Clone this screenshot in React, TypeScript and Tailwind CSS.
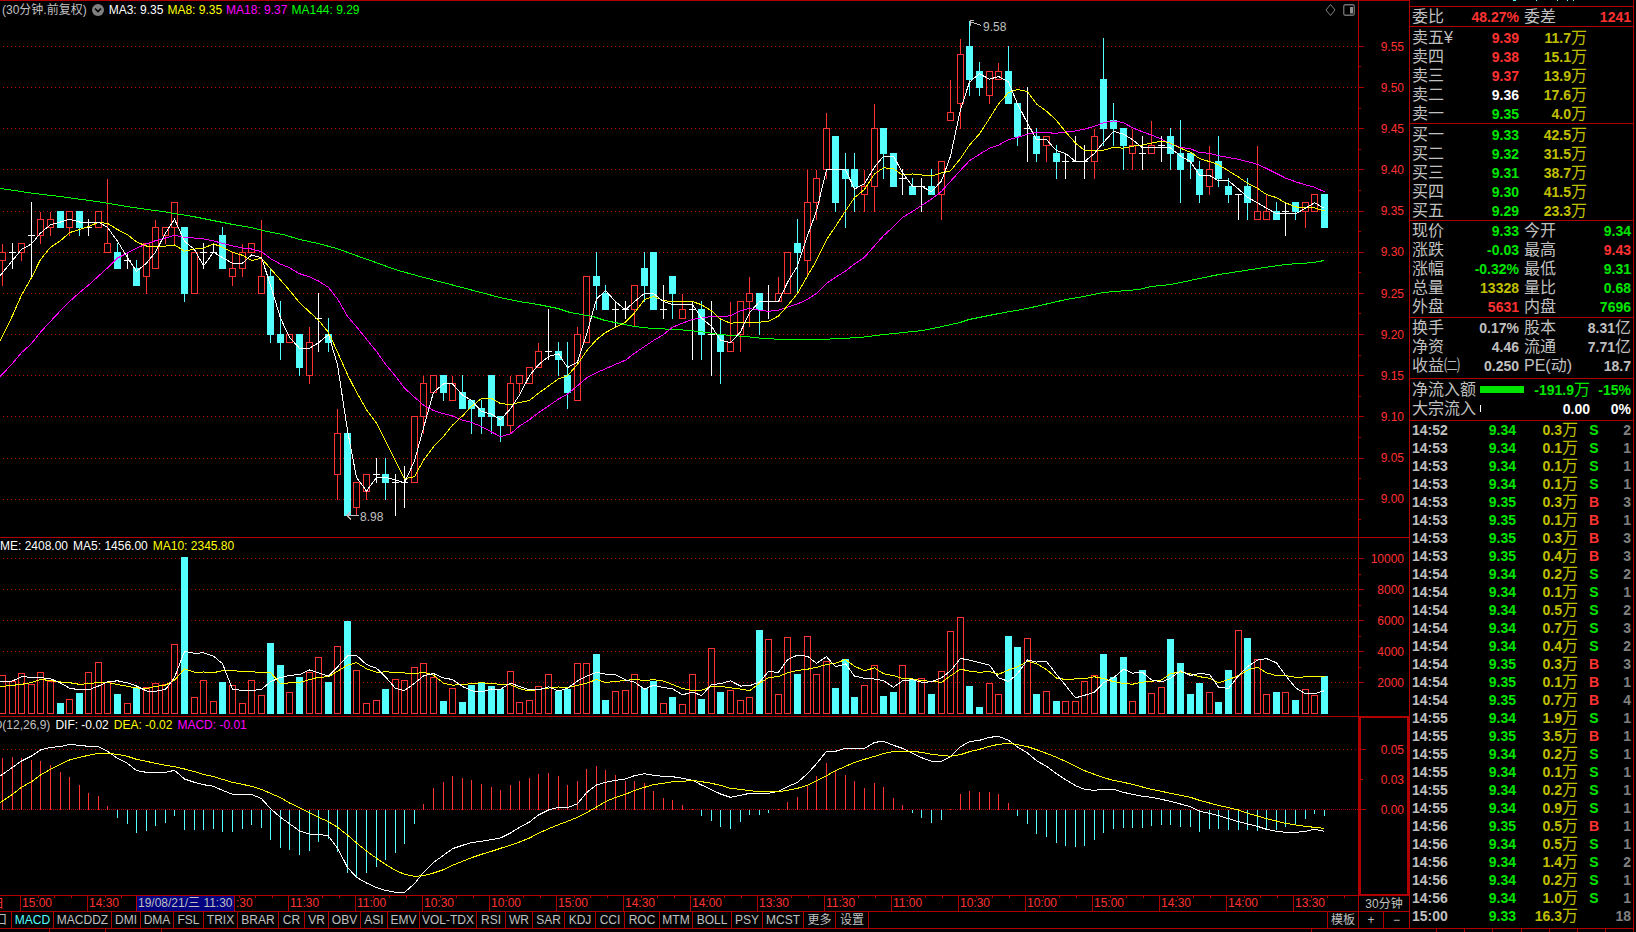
import React from "react";

/* ---------- Data ---------- */

// [open, high, low, close] in cents above 9.00
const CANDLES: number[][] = [
  [29, 31, 26, 30], [30, 31, 28, 30], [30, 31, 29, 31], [32, 36, 27, 32], [32, 35, 31, 34],
  [33, 35, 32, 34], [35, 35, 33, 33], [33, 35, 32, 35], [35, 35, 32, 33], [33, 34, 32, 33],
  [33, 35, 33, 35], [30, 39, 30, 31], [30, 31, 28, 28], [29, 30, 28, 29], [28, 29, 26, 26],
  [27, 31, 25, 31], [28, 34, 28, 33], [32, 33, 31, 33], [33, 36, 31, 36], [33, 33, 24, 25],
  [25, 30, 25, 30], [30, 31, 28, 30], [30, 31, 30, 30], [32, 33, 28, 28], [27, 30, 26, 28],
  [28, 31, 27, 30], [30, 31, 30, 31], [25, 34, 25, 27], [27, 28, 19, 20], [20, 24, 17, 19],
  [19, 20, 19, 20], [20, 20, 15, 16], [15, 21, 14, 19], [22, 25, 18, 22], [20, 22, 18, 19],
  [3, 11, 0, 8], [8, 8, -2, -2], [-1, 2, -2, 2], [1, 3, 0, 3], [3, 5, 2, 3],
  [3, 5, 0, 2], [2, 3, -2, 2], [2, 4, -1, 2], [2, 10, 2, 10], [10, 15, 8, 14],
  [13, 15, 13, 15], [15, 15, 12, 13], [12, 15, 12, 14], [13, 15, 11, 11], [12, 12, 8, 11],
  [11, 12, 8, 10], [15, 15, 8, 10], [10, 10, 7, 9], [9, 15, 8, 14], [14, 15, 13, 15],
  [14, 16, 14, 16], [16, 19, 16, 18], [18, 23, 17, 18], [18, 19, 15, 17], [15, 19, 11, 13],
  [12, 21, 12, 20], [19, 27, 19, 27], [27, 30, 23, 26], [25, 26, 23, 23], [23, 24, 21, 23],
  [23, 24, 22, 23], [23, 26, 21, 26], [28, 30, 24, 26], [30, 30, 23, 23], [23, 26, 22, 23],
  [27, 27, 22, 25], [22, 25, 22, 23], [23, 24, 17, 23], [23, 24, 17, 20], [20, 24, 15, 20],
  [20, 22, 14, 18], [18, 24, 18, 19], [20, 24, 18, 24], [24, 27, 21, 25], [25, 25, 20, 23],
  [24, 26, 22, 24], [24, 27, 24, 25], [25, 30, 25, 30], [31, 34, 25, 30], [29, 40, 27, 36],
  [36, 40, 34, 39], [40, 47, 39, 45], [44, 44, 35, 36], [40, 42, 33, 39], [40, 42, 35, 38],
  [37, 40, 35, 38], [38, 48, 35, 45], [45, 45, 39, 42], [42, 42, 38, 38], [39, 40, 37, 39],
  [38, 39, 37, 37], [38, 39, 35, 38], [38, 40, 37, 37], [37, 41, 34, 41], [46, 51, 46, 47],
  [48, 56, 45, 54], [55, 58, 49, 51], [52, 53, 49, 50], [49, 52, 48, 52], [51, 53, 51, 52],
  [52, 55, 48, 48], [48, 48, 43, 44], [45, 50, 41, 45], [44, 45, 41, 42], [43, 44, 41, 44],
  [42, 43, 39, 41], [41, 42, 39, 41], [41, 44, 41, 41], [41, 43, 39, 41], [41, 45, 39, 44],
  [51, 56, 43, 45], [46, 48, 43, 45], [45, 45, 40, 43], [42, 45, 40, 43], [42, 44, 40, 42],
  [42, 46, 42, 43], [43, 44, 41, 43], [44, 45, 40, 42], [42, 46, 36, 40], [42, 42, 39, 41],
  [40, 41, 36, 37], [38, 43, 37, 40], [41, 44, 38, 39], [38, 39, 36, 37], [37, 37, 34, 37],
  [38, 39, 34, 36], [34, 43, 34, 35], [34, 37, 34, 35], [35, 36, 34, 34], [35, 36, 32, 35],
  [36, 36, 34, 35], [35, 36, 33, 36], [35, 37, 35, 37], [37, 37, 33, 33],
];

// Volume bar tops on a grid where 551 is zero and 93 units are 2000 lots
const VOLUME: number[] = [
  437, 455, 431, 463, 427, 455, 519, 508, 489, 427,
  397, 457, 492, 520, 474, 472, 461, 463, 343, 82,
  502, 451, 514, 456, 466, 520, 451, 497, 340, 405,
  487, 441, 427, 382, 456, 349, 273, 421, 520, 511,
  478, 448, 451, 412, 400, 442, 514, 475, 516, 465,
  460, 469, 478, 424, 517, 511, 469, 433, 484, 478,
  400, 400, 373, 511, 485, 481, 433, 475, 454, 520,
  501, 523, 433, 507, 355, 487, 481, 511, 502, 301,
  328, 493, 322, 432, 319, 433, 394, 474, 388, 502,
  466, 406, 498, 487, 406, 448, 445, 492, 424, 304,
  262, 469, 532, 460, 493, 319, 352, 325, 492, 484,
  514, 514, 514, 454, 436, 373, 442, 382, 514, 421,
  490, 472, 328, 400, 492, 460, 487, 517, 421, 301,
  325, 388, 493, 487, 487, 511, 478, 496, 438,
];

// MACD series on a grid where 838 is zero and 179 units are 0.05
const DIF: number[] = [
  733, 712, 693, 678, 660, 652, 650, 643, 646, 649,
  650, 664, 685, 700, 722, 727, 727, 727, 721, 747,
  757, 764, 769, 781, 793, 794, 793, 806, 836, 862,
  881, 903, 912, 913, 918, 954, 1012, 1042, 1059, 1073,
  1081, 1087, 1087, 1061, 1027, 997, 976, 956, 946, 938,
  934, 929, 924, 909, 892, 876, 855, 840, 832, 833,
  821, 788, 765, 757, 751, 747, 737, 731, 736, 739,
  740, 745, 751, 765, 779, 792, 802, 796, 790, 790,
  790, 784, 770, 757, 731, 701, 664, 664, 655, 656,
  655, 637, 634, 646, 655, 670, 683, 694, 694, 680,
  650, 635, 631, 622, 619, 631, 651, 669, 692, 709,
  731, 749, 767, 778, 781, 778, 778, 787, 793, 799,
  802, 808, 814, 822, 830, 844, 850, 857, 866, 875,
  882, 889, 898, 904, 907, 907, 904, 898, 904,
];
const DEA: number[] = [
  813, 793, 772, 755, 735, 718, 703, 690, 682, 676,
  670, 670, 673, 679, 688, 694, 700, 706, 710, 717,
  725, 733, 740, 748, 757, 763, 769, 778, 790, 803,
  819, 833, 848, 862, 875, 892, 915, 939, 963, 985,
  1003, 1021, 1033, 1039, 1037, 1029, 1019, 1006, 994, 983,
  973, 964, 955, 946, 936, 924, 910, 896, 884, 874,
  862, 848, 831, 815, 802, 793, 781, 772, 764, 760,
  755, 754, 751, 755, 760, 766, 775, 778, 782, 785,
  785, 785, 781, 775, 766, 752, 737, 722, 709, 697,
  688, 679, 671, 664, 664, 664, 667, 673, 676, 679,
  674, 665, 658, 649, 643, 640, 644, 650, 659, 670,
  682, 694, 709, 722, 733, 743, 751, 757, 763, 771,
  778, 784, 790, 796, 802, 811, 819, 826, 833, 840,
  850, 858, 866, 873, 880, 885, 889, 892, 895,
];
const HIST: number[] = [
  684, 682, 684, 690, 693, 706, 727, 741, 766, 790,
  798, 828, 863, 881, 908, 902, 887, 879, 857, 899,
  899, 899, 896, 905, 905, 896, 884, 893, 929, 953,
  959, 974, 962, 935, 926, 965, 1028, 1042, 1028, 1010,
  989, 968, 941, 881, 822, 774, 756, 738, 744, 751,
  762, 771, 780, 766, 753, 744, 732, 729, 738, 766,
  753, 717, 708, 720, 735, 753, 753, 759, 783, 804,
  810, 825, 837, 857, 872, 890, 896, 875, 854, 854,
  848, 837, 816, 801, 765, 738, 699, 723, 735, 753,
  774, 759, 771, 804, 825, 848, 863, 878, 869, 837,
  792, 783, 786, 786, 792, 819, 857, 881, 911, 920,
  938, 947, 950, 947, 929, 908, 896, 893, 893, 893,
  887, 884, 884, 890, 890, 905, 896, 896, 899, 899,
  899, 902, 899, 899, 890, 881, 866, 851, 857,
];

const MA144: number[][] = [
  [0, 188], [15, 190], [27, 192], [43, 194], [60, 196], [82, 199], [103, 202], [127, 206],
  [147, 209], [163, 211], [174, 213], [193, 216], [213, 220], [233, 224], [251, 227], [267, 231],
  [283, 234], [300, 239], [318, 243], [337, 248], [356, 255], [376, 262], [395, 269], [420, 276],
  [443, 282], [462, 287], [481, 292], [500, 297], [519, 301], [538, 304], [558, 308], [570, 312],
  [593, 316], [605, 320], [625, 324], [634, 326], [653, 328], [677, 329], [700, 331], [720, 334],
  [745, 336], [763, 338], [785, 339], [820, 339], [840, 338], [860, 337], [884, 334], [923, 330],
  [942, 326], [960, 322], [969, 319], [999, 313], [1027, 308], [1066, 299], [1084, 296],
  [1103, 292], [1139, 289], [1151, 286], [1171, 284], [1209, 276], [1219, 274], [1258, 268],
  [1285, 264], [1314, 262], [1324, 260],
];

const MA3_LEAD = [27.5, 29];
const MA8_LEAD = [19.8, 22.3, 24.8, 26.9, 29.1, 30.6, 31.4];
const MA18_LEAD = [15.2, 16.5, 17.8, 18.9, 20.3, 21.6, 22.9, 24, 25.1, 26, 27.1, 28.1, 29.3, 29.9, 30.5, 31, 31.4];
const VMA5_LEAD = [455, 453, 440, 442];
const VMA10_LEAD = [469, 466, 463, 458, 448, 452, 456, 458, 463];

/* ---------- Chart helpers ---------- */

const RED = "#ff3232";
const CYAN = "#54ffff";
const FRAME = "#b00000";

const px = (n: number) => Math.floor(n) + 0.5;
const xAt = (i: number) => px(2.6 + 9.577 * i);
const priceY = (c: number) => 46.3 + (55 - c) * 8.236;
const gridY = (v: number) => 530 + v / 3;

function movingAverage(values: number[], n: number, lead: number[]): number[] {
  return values.map((_, i) => {
    if (i < n - 1) return lead[i];
    let sum = 0;
    for (let k = i - n + 1; k <= i; k++) sum += values[k];
    return sum / n;
  });
}

function linePoints(values: number[], y: (v: number) => number): string {
  const start = `0,${y(values[0] - (values[1] - values[0]) * 0.25)}`;
  return start + " " + values.map((v, i) => `${xAt(i)},${y(v)}`).join(" ");
}

const CLOSES = CANDLES.map((c) => c[3]);
const isDown = (i: number) => {
  const [open, , , close] = CANDLES[i];
  return close < open || (close === open && i > 0 && close < CLOSES[i - 1]);
};

function Line({ points, color }: { points: string; color: string }) {
  return <polyline points={points} fill="none" stroke={color} strokeWidth="1" />;
}

function GridLine({ y, dash = "1 3" }: { y: number; dash?: string }) {
  return <line x1="3" x2="1358" y1={y} y2={y} stroke={FRAME} strokeWidth="1" strokeDasharray={dash} />;
}

function Plot({ viewBox, label, children }: { viewBox: string; label: string; children: React.ReactNode }) {
  return (
    <svg
      role="img"
      aria-label={label}
      viewBox={viewBox}
      preserveAspectRatio="none"
      shapeRendering="crispEdges"
      className="block h-full min-w-0 flex-1"
    >
      {children}
    </svg>
  );
}

function Candle({ i }: { i: number }) {
  const [open, high, low, close] = CANDLES[i];
  const x = xAt(i);
  const top = px(priceY(Math.max(open, close)));
  const bottom = px(priceY(Math.min(open, close)));
  const hi = px(priceY(high));
  const lo = px(priceY(low));
  if (open === close) {
    return <path d={`M${x} ${hi - 0.5}V${lo + 0.5}M${x - 3.5} ${top}H${x + 3.5}`} stroke="#fff" />;
  }
  if (close < open) {
    return (
      <g>
        <path d={`M${x} ${hi - 0.5}V${lo + 0.5}`} stroke={CYAN} />
        <rect x={x - 3.5} y={top - 0.5} width="7" height={bottom - top + 1} fill={CYAN} />
      </g>
    );
  }
  return (
    <g stroke={RED} fill="none">
      <path d={`M${x} ${hi}V${top}M${x} ${bottom}V${lo}`} />
      <rect x={x - 3} y={top} width="6" height={bottom - top} />
    </g>
  );
}

function Axis({ viewBox, majors, minors }: { viewBox: string; majors: number[]; minors: number[] }) {
  return (
    <svg
      viewBox={viewBox}
      preserveAspectRatio="none"
      shapeRendering="crispEdges"
      className="block h-full w-[6px] shrink-0"
      aria-hidden="true"
    >
      {majors.map((y) => <path key={y} d={`M0 ${y}H5`} stroke={FRAME} />)}
      {minors.map((y) => <path key={y} d={`M0 ${y}H2`} stroke={FRAME} />)}
    </svg>
  );
}

/* ---------- Panes ---------- */

const PRICE_LABELS = ["9.55", "9.50", "9.45", "9.40", "9.35", "9.30", "9.25", "9.20", "9.15", "9.10", "9.05", "9.00"];
const PRICE_LEVELS = PRICE_LABELS.map((_, k) => px(priceY(55 - 5 * k)));
const PRICE_MINORS = PRICE_LABELS.map((_, k) => px(priceY(52.5 - 5 * k)));

function PricePane() {
  return (
    <section className="relative flex min-h-0 border-t border-[#b00000]">
      <Plot viewBox="0 1 1358 536" label="30分钟K线">
        {PRICE_LEVELS.map((y) => <GridLine key={y} y={y} />)}
        {CANDLES.map((_, i) => <Candle key={i} i={i} />)}
        <Line color="#00ff00" points={MA144.map(([x, y]) => `${x},${y + 0.5}`).join(" ")} />
        <Line color="#ff00ff" points={linePoints(movingAverage(CLOSES, 18, MA18_LEAD), priceY)} />
        <Line color="#ffff00" points={linePoints(movingAverage(CLOSES, 8, MA8_LEAD), priceY)} />
        <Line color="#ffffff" points={linePoints(movingAverage(CLOSES, 3, MA3_LEAD), priceY)} />
        <g stroke="#c0c0c0" fill="none">
          <path d="M981 25.5L970 21.5M974 20.5H970V26" />
          <path d="M359 515.5H347M351 511.5L347 515.5L351 519.5" />
        </g>
        <g fill="#c0c0c0" className="font-['Liberation_Sans',sans-serif] text-[12px]">
          <text x="983" y="31">9.58</text>
          <text x="360" y="521">8.98</text>
        </g>
      </Plot>
      <div className="flex w-[51px] shrink-0 border-l border-[#b00000]">
        <Axis viewBox="0 1 6 536" majors={PRICE_LEVELS} minors={PRICE_MINORS} />
        <div className="flex flex-1 flex-col pt-[25px] pr-[5px] pb-[17px] text-right text-[#ff3232]">
          {PRICE_LABELS.map((p) => (
            <span key={p} className="flex flex-1 items-center justify-end">{p}</span>
          ))}
        </div>
      </div>
      <header className="absolute top-0 right-[54px] left-0 flex h-[18px] items-center gap-[4px] pl-[2px] whitespace-nowrap">
        <span className="text-[#c0c0c0]">(30分钟.前复权)</span>
        <button aria-label="均线设置" className="mx-[1px] flex size-[12px] items-center justify-center rounded-full bg-[#808080]">
          <svg viewBox="0 0 12 12" className="size-[12px]"><path d="M3 4.5L6 7.5L9 4.5" fill="none" stroke="#000" strokeWidth="1.6" /></svg>
        </button>
        <span className="text-white">MA3: 9.35</span>
        <span className="text-[#ffff00]">MA8: 9.35</span>
        <span className="text-[#ff00ff]">MA18: 9.37</span>
        <span className="text-[#00ff00]">MA144: 9.29</span>
        <div className="ml-auto flex items-center gap-[6px]">
          <button aria-label="标记">
            <svg viewBox="0 0 12 12" className="size-[12px]"><path d="M5.5 0.5L10 6L5.5 11.5L1 6Z" fill="none" stroke="#808080" /></svg>
          </button>
          <button aria-label="侧栏">
            <svg viewBox="0 0 12 12" className="size-[12px]">
              <rect x="0.75" y="0.75" width="10.5" height="10.5" rx="1.5" fill="none" stroke="#707070" strokeWidth="1.3" />
              <rect x="7" y="3" width="3" height="6.5" fill="#909090" />
            </svg>
          </button>
        </div>
      </header>
    </section>
  );
}

const VOLUME_LEVELS = [558.5, 589.5, 620.5, 651.5, 682.5];

function VolumePane() {
  return (
    <section className="relative flex min-h-0 border-t border-[#b00000]">
      <Plot viewBox="0 538 1358 178" label="成交量">
        {VOLUME_LEVELS.map((y) => <GridLine key={y} y={y} />)}
        {VOLUME.map((v, i) => {
          const top = px(gridY(v));
          return isDown(i) ? (
            <rect key={i} x={xAt(i) - 3.5} y={top - 0.5} width="7" height={714 - top + 0.5} fill={CYAN} />
          ) : (
            <rect key={i} x={xAt(i) - 3} y={top} width="6" height={713.5 - top} fill="none" stroke={RED} />
          );
        })}
        <Line color="#ffff00" points={linePoints(movingAverage(VOLUME, 10, VMA10_LEAD), gridY)} />
        <Line color="#ffffff" points={linePoints(movingAverage(VOLUME, 5, VMA5_LEAD), gridY)} />
      </Plot>
      <div className="flex w-[51px] shrink-0 border-l border-[#b00000]">
        <Axis viewBox="0 538 6 178" majors={VOLUME_LEVELS} minors={[574.5, 605.5, 636.5, 667.5]} />
        <div className="flex flex-1 flex-col pt-[5px] pr-[5px] pb-[18px] text-[#ff3232]">
          {["10000", "8000", "6000", "4000", "2000"].map((v) => (
            <span key={v} className="flex flex-1 items-center justify-end">{v}</span>
          ))}
        </div>
      </div>
      <header className="absolute top-0 left-0 flex h-[16px] items-center gap-[5px] whitespace-nowrap">
        <span className="text-white">ME: 2408.00</span>
        <span className="text-white">MA5: 1456.00</span>
        <span className="text-[#ffff00]">MA10: 2345.80</span>
      </header>
    </section>
  );
}

function MacdPane() {
  return (
    <section className="relative flex min-h-0 overflow-hidden border-t border-[#b00000]">
      <Plot viewBox="0 717 1358 178" label="MACD">
        <GridLine y={749.5} />
        <GridLine y={809.5} dash="1 1" />
        {HIST.map((v, i) => (
          <path key={i} d={`M${xAt(i)} 809.5V${gridY(v)}`} stroke={v < 838 ? RED : CYAN} />
        ))}
        <Line color="#ffffff" points={linePoints(DIF, gridY)} />
        <Line color="#ffff00" points={linePoints(DEA, gridY)} />
      </Plot>
      <div className="flex w-[51px] shrink-0 border-l border-[#b00000]">
        <div className="flex flex-1 border-2 border-t-[1px] border-b-[1px] border-[#b00000]">
          <Axis viewBox="0 718 6 176" majors={[749.5, 809.5]} minors={[779.5]} />
          <div className="flex flex-1 flex-col pt-[17px] pr-[3px] text-[#ff3232]">
            {["0.05", "0.03", "0.00"].map((v) => (
              <span key={v} className="flex h-[30px] items-center justify-end">{v}</span>
            ))}
          </div>
        </div>
      </div>
      <header className="absolute top-0 left-0 -ml-[33px] flex h-[16px] items-center gap-[5px] whitespace-nowrap">
        <span className="text-[#c0c0c0]">MACD(12,26,9)</span>
        <span className="text-white">DIF: -0.02</span>
        <span className="text-[#ffff00]">DEA: -0.02</span>
        <span className="text-[#ff00ff]">MACD: -0.01</span>
      </header>
    </section>
  );
}

// The third and fourth marks lie under the date cursor, which leaves only ":30" in view
const TIMES = [
  "15:00", "14:30", "", ":30", "11:30", "11:00", "10:30", "10:00", "15:00", "14:30",
  "14:00", "13:30", "11:30", "11:00", "10:30", "10:00", "15:00", "14:30", "14:00", "13:30",
];

function TimeAxis() {
  return (
    <div className="flex min-h-0 border-t border-[#b00000] whitespace-nowrap">
      <div className="relative flex min-w-0 flex-1 overflow-hidden text-[#ff3232]">
        <div className="flex w-[20px] shrink-0 items-center overflow-hidden">
          <span className="-ml-[8px]">日</span>
        </div>
        {TIMES.map((t, k) => (
          <div key={k} className="relative w-[67px] shrink-0 border-l border-[#b00000]">
            <div className="absolute inset-x-0 top-0 grid h-[2px] grid-cols-4">
              <i /><i className="border-l border-[#b00000]" /><i className="border-l border-[#b00000]" /><i className="border-l border-[#b00000]" />
            </div>
            <span className={`block leading-[15px] ${t === ":30" ? "pl-[14px]" : "pl-[1px]"}`}>{t}</span>
          </div>
        ))}
        <time className="absolute top-0 left-[136px] h-full w-[99px] border-x border-[#b00000] bg-[#000080] pl-[1px] leading-[15px] text-[#c0c0c0]">
          19/08/21/三 11:30
        </time>
      </div>
      <div className="flex w-[51px] shrink-0 items-center justify-center border-l border-[#b00000] text-[#c0c0c0]">30分钟</div>
    </div>
  );
}

const INDICATORS: [string, string][] = [
  ["MACD", "w-[42px]"], ["MACDDZ", "w-[58px]"], ["DMI", "w-[29px]"], ["DMA", "w-[33px]"],
  ["FSL", "w-[30px]"], ["TRIX", "w-[34px]"], ["BRAR", "w-[41px]"], ["CR", "w-[26px]"],
  ["VR", "w-[24px]"], ["OBV", "w-[32px]"], ["ASI", "w-[27px]"], ["EMV", "w-[32px]"],
  ["VOL-TDX", "w-[57px]"], ["RSI", "w-[29px]"], ["WR", "w-[27px]"], ["SAR", "w-[32px]"],
  ["KDJ", "w-[31px]"], ["CCI", "w-[29px]"], ["ROC", "w-[35px]"], ["MTM", "w-[33px]"],
  ["BOLL", "w-[39px]"], ["PSY", "w-[31px]"], ["MCST", "w-[41px]"], ["更多", "w-[32px]"],
  ["设置", "w-[33px]"],
];

function IndicatorTabs() {
  return (
    <nav className="flex min-h-0 overflow-hidden border-t border-[#b00000] whitespace-nowrap text-[#c0c0c0]">
      <button className="flex w-[12px] shrink-0 items-center justify-end overflow-hidden border-r border-[#b00000] pr-[4px]">窗口</button>
      {INDICATORS.map(([name, width]) => (
        <button
          key={name}
          className={`${width} flex shrink-0 items-center justify-center border-r border-[#b00000] ${name === "MACD" ? "text-[#54ffff]" : ""}`}
        >
          {name}
        </button>
      ))}
      <button className="ml-auto flex w-[31px] shrink-0 items-center justify-center border-l border-[#b00000]">模板</button>
      <button className="flex w-[25px] shrink-0 items-center justify-center border-l border-[#b00000]">+</button>
      <button className="flex w-[26px] shrink-0 items-center justify-center border-l border-[#b00000]">−</button>
    </nav>
  );
}

/* ---------- Quote side panel ---------- */

const TONE: Record<string, string> = {
  r: "text-[#ff3232]",
  g: "text-[#00e600]",
  y: "text-[#c0c000]",
  w: "text-white",
  s: "text-[#c0c0c0]",
};

function Value({ text, tone }: { text: string; tone: string }) {
  const unit = /[万亿]$/.test(text) ? text.slice(-1) : "";
  return (
    <span className={`text-[14px] font-bold ${TONE[tone]}`}>
      {unit ? text.slice(0, -1) : text}
      {unit && <span className="text-[16px] font-normal">{unit}</span>}
    </span>
  );
}

function Book({ rows, caption }: { rows: string[][]; caption: string }) {
  return (
    <div className="h-[97px] shrink-0 border-t border-[#b00000] pt-[1px]">
      <table aria-label={caption} className="w-full table-fixed">
        <colgroup><col className="w-[46px]" /><col className="w-[63px]" /><col className="w-[68px]" /><col /></colgroup>
        <tbody>
          {rows.map(([name, price, tone, vol]) => (
            <tr key={name} className="h-[19px]">
              <th scope="row" className="p-0 pl-[2px] text-left text-[16px] font-normal whitespace-nowrap">{name}</th>
              <td className="p-0 text-right"><Value text={price} tone={tone} /></td>
              <td className="p-0 text-right"><Value text={vol} tone="y" /></td>
              <td className="p-0" />
            </tr>
          ))}
        </tbody>
      </table>
    </div>
  );
}

function QuoteRow({ cells }: { cells: string[] }) {
  const [a, av, at, b, bv, bt] = cells;
  return (
    <div className="flex h-[19px] items-center gap-[5px] pr-[2px] pl-[2px] whitespace-nowrap">
      <div className="flex w-[107px] items-center justify-between"><span>{a}</span><Value text={av} tone={at} /></div>
      <div className="flex flex-1 items-center justify-between"><span>{b}</span><Value text={bv} tone={bt} /></div>
    </div>
  );
}

const ASKS = [
  ["卖五¥", "9.39", "r", "11.7万"], ["卖四", "9.38", "r", "15.1万"], ["卖三", "9.37", "r", "13.9万"],
  ["卖二", "9.36", "w", "17.6万"], ["卖一", "9.35", "g", "4.0万"],
];
const BIDS = [
  ["买一", "9.33", "g", "42.5万"], ["买二", "9.32", "g", "31.5万"], ["买三", "9.31", "g", "38.7万"],
  ["买四", "9.30", "g", "41.5万"], ["买五", "9.29", "g", "23.3万"],
];
const QUOTE = [
  ["现价", "9.33", "g", "今开", "9.34", "g"],
  ["涨跌", "-0.03", "g", "最高", "9.43", "r"],
  ["涨幅", "-0.32%", "g", "最低", "9.31", "g"],
  ["总量", "13328", "y", "量比", "0.68", "g"],
  ["外盘", "5631", "r", "内盘", "7696", "g"],
];
const FUNDAMENTALS = [
  ["换手", "0.17%", "s", "股本", "8.31亿", "s"],
  ["净资", "4.46", "s", "流通", "7.71亿", "s"],
  ["收益㈡", "0.250", "s", "PE(动)", "18.7", "s"],
];

const TAPE = [
  ["14:52", "9.34", "0.3万", "S", "2"], ["14:53", "9.34", "0.1万", "S", "1"],
  ["14:53", "9.34", "0.1万", "S", "1"], ["14:53", "9.34", "0.1万", "S", "1"],
  ["14:53", "9.35", "0.3万", "B", "3"], ["14:53", "9.35", "0.1万", "B", "1"],
  ["14:53", "9.35", "0.3万", "B", "3"], ["14:53", "9.35", "0.4万", "B", "3"],
  ["14:54", "9.34", "0.2万", "S", "2"], ["14:54", "9.34", "0.1万", "S", "1"],
  ["14:54", "9.34", "0.5万", "S", "2"], ["14:54", "9.34", "0.7万", "S", "3"],
  ["14:54", "9.34", "0.4万", "S", "2"], ["14:54", "9.35", "0.3万", "B", "3"],
  ["14:54", "9.35", "0.1万", "B", "1"], ["14:54", "9.35", "0.7万", "B", "4"],
  ["14:55", "9.34", "1.9万", "S", "1"], ["14:55", "9.35", "3.5万", "B", "1"],
  ["14:55", "9.34", "0.2万", "S", "1"], ["14:55", "9.34", "0.1万", "S", "1"],
  ["14:55", "9.34", "0.2万", "S", "1"], ["14:55", "9.34", "0.9万", "S", "1"],
  ["14:56", "9.35", "0.5万", "B", "1"], ["14:56", "9.34", "0.5万", "S", "1"],
  ["14:56", "9.34", "1.4万", "S", "2"], ["14:56", "9.34", "0.2万", "S", "1"],
  ["14:56", "9.34", "1.0万", "S", "1"], ["15:00", "9.33", "16.3万", "", "18"],
];

function Tape() {
  return (
    <table aria-label="成交明细" className="w-full table-fixed">
      <colgroup><col className="w-[46px]" /><col className="w-[60px]" /><col className="w-[62px]" /><col className="w-[32px]" /><col /></colgroup>
      <tbody>
        {TAPE.map(([time, price, vol, side, count], k) => (
          <tr key={k} className="h-[18px]">
            <td className="p-0 pl-[2px]"><Value text={time} tone="s" /></td>
            <td className="p-0 text-right"><Value text={price} tone="g" /></td>
            <td className="p-0 text-right"><Value text={vol} tone="y" /></td>
            <td className="p-0 text-center"><Value text={side} tone={side === "B" ? "r" : "g"} /></td>
            <td className="p-0 pr-[2px] text-right text-[14px] font-bold text-[#808080]">{count}</td>
          </tr>
        ))}
      </tbody>
    </table>
  );
}

function SidePanel() {
  return (
    <aside className="mr-[2px] flex w-[225px] shrink-0 flex-col overflow-hidden text-[16px] leading-[18px] font-normal text-[#c0c0c0]">
      <div className="flex min-h-0 flex-1 flex-col border-x border-b border-[#b00000]">
        <svg viewBox="0 0 223 6" className="block h-[6px] w-full shrink-0" shapeRendering="crispEdges" aria-hidden="true">
          <path d="M103 0.5H106M126 0.5H127M147 0.5H148M157 0.5H158M163 0.5H164" stroke={CYAN} />
        </svg>
        <div className="h-[20px] shrink-0 border-t border-[#b00000]">
          <QuoteRow cells={["委比", "48.27%", "r", "委差", "1241", "r"]} />
        </div>
        <Book rows={ASKS} caption="卖盘" />
        <Book rows={BIDS} caption="买盘" />
        <div className="h-[97px] shrink-0 border-t border-[#b00000]">
          {QUOTE.map((r) => <QuoteRow key={r[0]} cells={r} />)}
        </div>
        <div className="h-[61px] shrink-0 border-t border-[#b00000]">
          {FUNDAMENTALS.map((r) => <QuoteRow key={r[0]} cells={r} />)}
        </div>
        <div className="h-[42px] shrink-0 border-t border-[#b00000] pt-[1px] pr-[2px] pl-[2px] whitespace-nowrap">
          <div className="grid h-[19px] grid-cols-[68px_44px_66px_1fr] items-center">
            <span>净流入额</span>
            <span className="h-[7px] bg-[#00e600]" />
            <span className="text-right"><Value text="-191.9万" tone="g" /></span>
            <span className="text-right"><Value text="-15%" tone="g" /></span>
          </div>
          <div className="grid h-[19px] grid-cols-[68px_44px_66px_1fr] items-center">
            <span>大宗流入</span>
            <span className="h-[7px] w-px bg-white" />
            <span className="text-right"><Value text="0.00" tone="w" /></span>
            <span className="text-right"><Value text="0%" tone="w" /></span>
          </div>
        </div>
        <div className="min-h-0 flex-1 overflow-hidden border-t border-[#b00000]"><Tape /></div>
      </div>
      <div className="grid h-[3px] shrink-0 grid-cols-8">
        {[0, 1, 2, 3, 4, 5, 6, 7].map((k) => <i key={k} className="border-r border-[#b00000]" />)}
      </div>
    </aside>
  );
}

/* ---------- Page ---------- */

export default function App() {
  return (
    <div className="flex h-screen bg-black font-['Liberation_Sans','Noto_Sans_CJK_SC',sans-serif] text-[12px] leading-[14px]">
      <main className="grid min-w-0 flex-1 grid-cols-[minmax(0,1fr)] grid-rows-[537fr_179fr_179fr_16px_17px_4px]">
        <PricePane />
        <VolumePane />
        <MacdPane />
        <TimeAxis />
        <IndicatorTabs />
        <div className="flex border-t border-[#b00000]">
          <i className="w-[50px] border-r border-[#b00000]" />
          <i className="w-[56px] border-r border-[#b00000]" />
          <i className="w-[56px] border-r border-[#b00000]" />
          <i className="ml-auto w-[98px] border-l border-[#b00000]" />
        </div>
      </main>
      <SidePanel />
    </div>
  );
}
